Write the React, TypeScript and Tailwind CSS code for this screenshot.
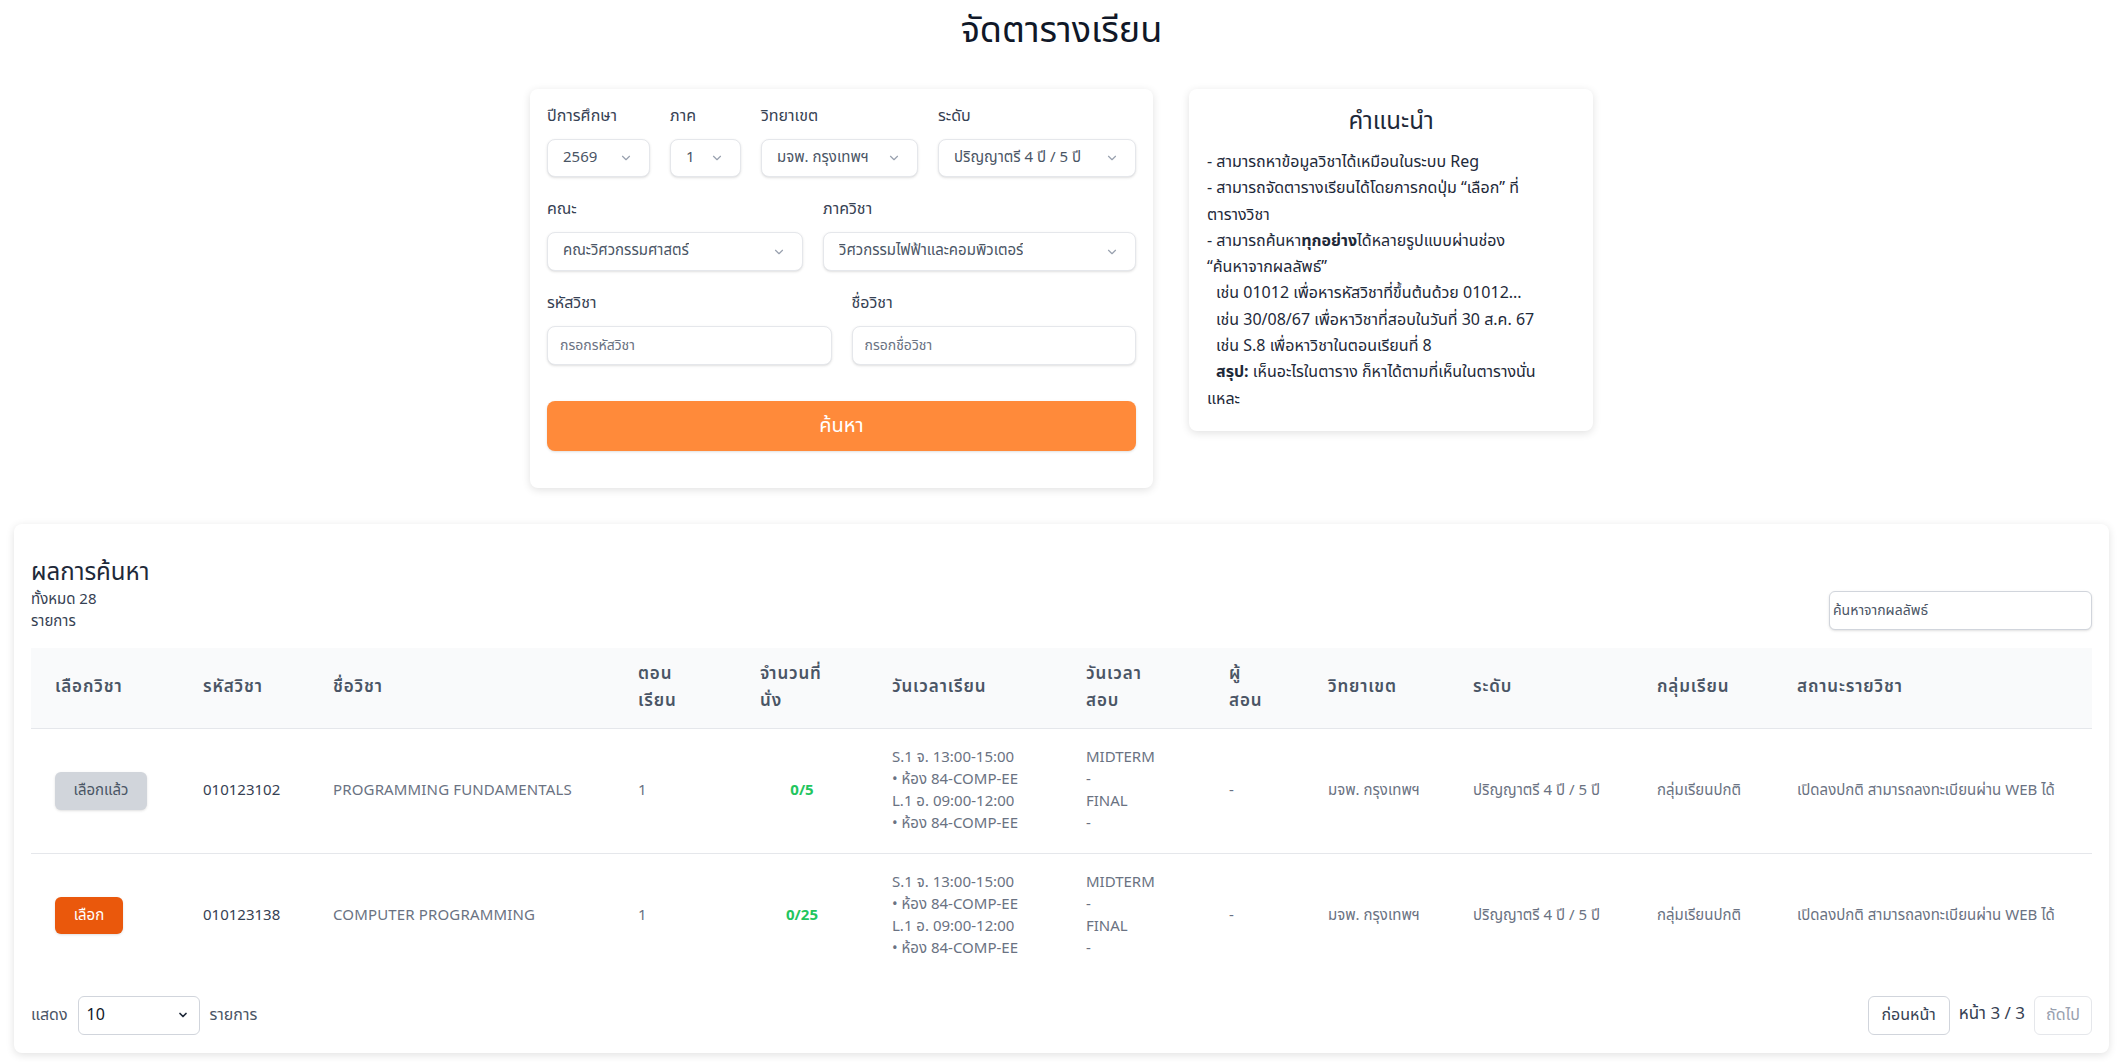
import React from "react";

const Chevron = ({ className = "" }: { className?: string }) => (
  <svg viewBox="0 0 24 24" className={className} fill="none" stroke="currentColor" strokeWidth={2} strokeLinecap="round" strokeLinejoin="round">
    <path d="m6 9 6 6 6-6" />
  </svg>
);

const FakeSelect = ({ value, className = "" }: { value: string; className?: string }) => (
  <div className={`flex h-[38px] items-center justify-between rounded-lg border border-gray-200 bg-white pl-[15px] pr-[16px] shadow-sm ${className}`}>
    <span className="truncate text-[15px] text-gray-600">{value}</span>
    <Chevron className="h-[14px] w-[14px] shrink-0 text-gray-400" />
  </div>
);

const Field = ({ label, children, className = "" }: { label: string; children: React.ReactNode; className?: string }) => (
  <div className={`flex flex-col gap-[11px] ${className}`}>
    <label className="text-base leading-6 text-gray-700">{label}</label>
    {children}
  </div>
);

const rows = [
  { selected: true, code: "010123102", name: "PROGRAMMING FUNDAMENTALS", sec: "1", seats: "0/5" },
  { selected: false, code: "010123138", name: "COMPUTER PROGRAMMING", sec: "1", seats: "0/25" },
];

const widths = [148, 130, 305, 122, 132, 194, 143, 99, 145, 184, 140, 319];

export default function App() {
  return (
    <div className="min-h-screen bg-white pb-[10px] font-['Noto_Sans_Thai','Noto_Sans','Liberation_Sans',sans-serif] text-gray-800">
      <h1 className="flex h-[62px] items-center justify-center text-[36px] text-gray-900">จัดตารางเรียน</h1>

      <div className="mt-[27px] flex items-start justify-center gap-9">
        {/* Search form */}
        <div className="w-[623px] rounded-lg bg-white px-[17px] pb-[37px] pt-[15px] shadow-[0_2px_8px_rgba(0,0,0,0.12)]">
          <div className="flex gap-5">
            <Field label="ปีการศึกษา"><FakeSelect value="2569" className="w-[103px]" /></Field>
            <Field label="ภาค"><FakeSelect value="1" className="w-[71px]" /></Field>
            <Field label="วิทยาเขต"><FakeSelect value="มจพ. กรุงเทพฯ" className="w-[157px]" /></Field>
            <Field label="ระดับ"><FakeSelect value="ปริญญาตรี 4 ปี / 5 ปี" className="w-[198px]" /></Field>
          </div>
          <div className="mt-5 flex gap-5">
            <Field label="คณะ"><FakeSelect value="คณะวิศวกรรมศาสตร์" className="h-[39px] w-[256px]" /></Field>
            <Field label="ภาควิชา"><FakeSelect value="วิศวกรรมไฟฟ้าและคอมพิวเตอร์" className="h-[39px] w-[313px]" /></Field>
          </div>
          <div className="mt-5 grid grid-cols-2 gap-5">
            <Field label="รหัสวิชา">
              <input placeholder="กรอกรหัสวิชา" className="h-[39px] w-full rounded-lg border border-gray-200 bg-white px-[12px] text-[14px] text-gray-700 shadow-sm outline-none placeholder:text-gray-500" />
            </Field>
            <Field label="ชื่อวิชา">
              <input placeholder="กรอกชื่อวิชา" className="h-[39px] w-full rounded-lg border border-gray-200 bg-white px-[12px] text-[14px] text-gray-700 shadow-sm outline-none placeholder:text-gray-500" />
            </Field>
          </div>
          <button className="mt-9 h-[50px] w-full rounded-lg bg-[#ff8a3a] text-[20px] text-white shadow-sm">ค้นหา</button>
        </div>

        {/* Instructions */}
        <div className="w-[404px] rounded-lg bg-white px-[18px] pb-[19px] pt-[17px] shadow-[0_2px_8px_rgba(0,0,0,0.12)]">
          <h2 className="mb-[11px] text-center text-2xl leading-8 text-gray-800">คำแนะนำ</h2>
          <div className="text-base leading-[26.3px] text-gray-800">
            <p>- สามารถหาข้อมูลวิชาได้เหมือนในระบบ Reg</p>
            <p>- สามารถจัดตารางเรียนได้โดยการกดปุ่ม “เลือก” ที่<br />ตารางวิชา</p>
            <p>- สามารถค้นหา<b>ทุกอย่าง</b>ได้หลายรูปแบบผ่านช่อง<br />“ค้นหาจากผลลัพธ์”</p>
            <p className="pl-[9px]">เช่น 01012 เพื่อหารหัสวิชาที่ขึ้นต้นด้วย 01012...</p>
            <p className="pl-[9px]">เช่น 30/08/67 เพื่อหาวิชาที่สอบในวันที่ 30 ส.ค. 67</p>
            <p className="pl-[9px]">เช่น S.8 เพื่อหาวิชาในตอนเรียนที่ 8</p>
            <p><span className="pl-[9px] font-bold">สรุป:</span> เห็นอะไรในตาราง ก็หาได้ตามที่เห็นในตารางนั่น<br />แหละ</p>
          </div>
        </div>
      </div>

      {/* Results */}
      <div className="mx-[14px] mt-9 rounded-lg bg-white px-[17px] pb-[18px] pt-[33px] shadow-[0_2px_8px_rgba(0,0,0,0.12)]">
        <div className="mb-[15px] flex items-end justify-between">
          <div>
            <h3 className="text-2xl leading-8 text-gray-800">ผลการค้นหา</h3>
            <p className="w-[70px] text-[15px] leading-[22px] text-gray-700">ทั้งหมด 28 รายการ</p>
          </div>
          <input placeholder="ค้นหาจากผลลัพธ์" className="mb-[3px] h-[39px] w-[263px] rounded-md border border-gray-300 bg-white px-[3px] text-[14px] shadow-sm outline-none placeholder:text-gray-600" />
        </div>

        <table className="w-full table-fixed border-collapse">
          <colgroup>
            {widths.map((w, i) => (
              <col key={i} style={{ width: w }} />
            ))}
          </colgroup>
          <thead className="bg-[#f9fafb]">
            <tr className="h-[80px] border-b border-gray-200 text-left text-[17px] font-semibold leading-[27px] tracking-wider text-gray-600">
              <th className="px-6 font-semibold">เลือกวิชา</th>
              <th className="px-6 font-semibold">รหัสวิชา</th>
              <th className="px-6 font-semibold">ชื่อวิชา</th>
              <th className="px-6 font-semibold">ตอน<br />เรียน</th>
              <th className="px-6 font-semibold">จำนวนที่<br />นั่ง</th>
              <th className="px-6 font-semibold">วันเวลาเรียน</th>
              <th className="px-6 font-semibold">วันเวลา<br />สอบ</th>
              <th className="px-6 font-semibold">ผู้<br />สอน</th>
              <th className="px-6 font-semibold">วิทยาเขต</th>
              <th className="px-6 font-semibold">ระดับ</th>
              <th className="px-6 font-semibold">กลุ่มเรียน</th>
              <th className="px-6 font-semibold">สถานะรายวิชา</th>
            </tr>
          </thead>
          <tbody className="text-[15px] leading-[22px] text-gray-500">
            {rows.map((r) => (
              <tr key={r.code} className="border-b border-gray-200 last:border-b-0">
                <td className="px-6">
                  {r.selected ? (
                    <button className="h-[38px] w-[92px] rounded-md bg-[#d1d5db] text-[15px] text-gray-600 shadow-sm">เลือกแล้ว</button>
                  ) : (
                    <button className="h-[37px] w-[68px] rounded-md bg-[#ea580c] text-[15px] text-white shadow-sm">เลือก</button>
                  )}
                </td>
                <td className="px-6 text-gray-700">{r.code}</td>
                <td className="whitespace-nowrap px-6 tracking-[0.01em]">{r.name}</td>
                <td className="px-6">{r.sec}</td>
                <td className="px-6 text-center font-bold text-[#22c55e]">{r.seats}</td>
                <td className="whitespace-nowrap px-6 py-[18px]">
                  <div>S.1 จ. 13:00-15:00</div>
                  <div>• ห้อง 84-COMP-EE</div>
                  <div>L.1 อ. 09:00-12:00</div>
                  <div>• ห้อง 84-COMP-EE</div>
                </td>
                <td className="px-6">
                  <div>MIDTERM</div>
                  <div>-</div>
                  <div>FINAL</div>
                  <div>-</div>
                </td>
                <td className="px-6">-</td>
                <td className="whitespace-nowrap px-6">มจพ. กรุงเทพฯ</td>
                <td className="whitespace-nowrap px-6">ปริญญาตรี 4 ปี / 5 ปี</td>
                <td className="whitespace-nowrap px-6">กลุ่มเรียนปกติ</td>
                <td className="whitespace-nowrap px-6">เปิดลงปกติ สามารถลงทะเบียนผ่าน WEB ได้</td>
              </tr>
            ))}
          </tbody>
        </table>

        <div className="mt-[18px] flex items-center justify-between">
          <div className="flex items-center gap-[10px] text-[16px] text-gray-600">
            <span>แสดง</span>
            <div className="flex h-[39px] w-[122px] items-center justify-between rounded-md border border-gray-300 bg-white pl-[8px] pr-[10px] text-gray-900">
              <span>10</span>
              <Chevron className="h-[12px] w-[12px] text-gray-800 [stroke-width:3.5]" />
            </div>
            <span>รายการ</span>
          </div>
          <div className="flex items-center gap-[9px] text-[16px]">
            <button className="h-[39px] w-[82px] rounded-md border border-gray-300 bg-white text-gray-700">ก่อนหน้า</button>
            <span className="text-[17px] text-gray-700">หน้า 3 / 3</span>
            <button className="h-[39px] w-[58px] rounded-md border border-gray-200 bg-white text-gray-400">ถัดไป</button>
          </div>
        </div>
      </div>
    </div>
  );
}
